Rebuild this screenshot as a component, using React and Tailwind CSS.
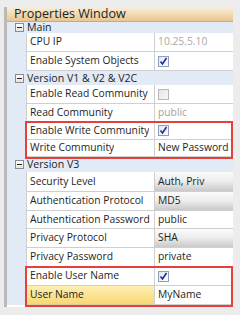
import React from "react";

const font = { fontFamily: '"Open Sans", "Noto Sans", sans-serif' };

function Minus() {
  return (
    <div className="w-[9px] h-[9px] border border-[#8c8c8c] bg-gradient-to-b from-white to-[#e4e4e4] flex items-center justify-center">
      <div className="w-[5px] h-[1px] bg-[#222]" />
    </div>
  );
}

function Check({ checked }) {
  if (!checked)
    return <div className="w-[11px] h-[11px] border border-[#b8b8b8] bg-gradient-to-br from-[#e6e6e6] to-[#f6f6f6]" />;
  return (
    <div className="w-[11px] h-[11px] border border-[#8e9fbd] bg-gradient-to-br from-[#dfe6f2] to-white flex items-center justify-center">
      <svg width="9" height="9" viewBox="0 0 9 9">
        <path d="M1.5 4.5 L3.5 7 L7.5 1" fill="none" stroke="#1f2a9c" strokeWidth="1.6" />
      </svg>
    </div>
  );
}

function Group({ title, h }) {
  return (
    <div className={`flex items-center bg-[#e2eaf5] ${h}`}>
      <div className="w-[19px] flex justify-end pr-[2px]">
        <Minus />
      </div>
      <span className="pl-[1px] text-[10.6px] text-[#1e1e1e] leading-none">{title}</span>
    </div>
  );
}

function Row({ label, h, children, kind, selected }) {
  return (
    <div className={`flex ${h}`}>
      <div className="w-[19px] shrink-0 bg-[#e2eaf5]" />
      <div
        className={`w-[128px] shrink-0 border-l border-b flex items-center pl-[3px] text-[10.3px] text-[#1e1e1e] ${
          selected ? "bg-gradient-to-b from-[#fdeeb0] to-[#f8d874] border-[#d9cf9c]" : "bg-white border-[#cfcfcf]"
        }`}
      >
        <span className="whitespace-nowrap overflow-hidden">{label}</span>
      </div>
      <div
        className={`flex-1 border-l border-b border-[#cfcfcf] flex items-center pl-[3px] text-[10.3px] whitespace-nowrap overflow-hidden ${
          kind === "combo" ? "bg-gradient-to-b from-[#fbfbfb] via-[#ececec] to-[#c9c9c9]" : "bg-white"
        }`}
      >
        {children}
      </div>
    </div>
  );
}

function Highlight({ children }) {
  return (
    <div className="relative">
      {children}
      <div className="absolute left-[18px] right-0 top-[-1px] bottom-[-2px] border-2 border-[#e5413c] pointer-events-none" />
    </div>
  );
}

export default function App() {
  return (
    <div className="w-[240px] h-[315px] bg-[#ececec] overflow-hidden" style={font}>
      <div className="flex pt-[7px] pl-[4px]">
        <div className="w-[3px] h-[300px] bg-[#b9b9b9]" />
        <div className="w-[226px] h-[300px] bg-white flex flex-col">
          <div className="h-[14px] bg-gradient-to-b from-[#faeed8] to-[#e8c68e] flex items-center pl-[7px]">
            <span className="text-[12.6px] text-[#1e1e1e] leading-none">Properties Window</span>
          </div>
          <div className="h-[1px] bg-[#9fb1c7]" />
          <Group title="Main" h="h-[11px]" />
          <Row label="CPU IP" h="h-[19px]">
            <span className="text-[#a9a9a9]">10.25.5.10</span>
          </Row>
          <Row label="Enable System Objects" h="h-[19px]">
            <Check checked />
          </Row>
          <Group title="Version V1 & V2 & V2C" h="h-[14px]" />
          <Row label="Enable Read Community" h="h-[19px]">
            <Check />
          </Row>
          <Row label="Read Community" h="h-[18px]">
            <span className="text-[#a3a3a3]">public</span>
          </Row>
          <Highlight>
            <Row label="Enable Write Community" h="h-[18px]">
              <Check checked />
            </Row>
            <Row label="Write Community" h="h-[17px]">
              <span className="text-[#1e1e1e]">New Password</span>
            </Row>
          </Highlight>
          <Group title="Version V3" h="h-[15px]" />
          <Row label="Security Level" h="h-[20px]" kind="combo">
            <span className="text-[#1e1e1e]">Auth, Priv</span>
          </Row>
          <Row label="Authentication Protocol" h="h-[19px]" kind="combo">
            <span className="text-[#1e1e1e]">MD5</span>
          </Row>
          <Row label="Authentication Password" h="h-[18px]">
            <span className="text-[#1e1e1e]">public</span>
          </Row>
          <Row label="Privacy Protocol" h="h-[19px]" kind="combo">
            <span className="text-[#1e1e1e]">SHA</span>
          </Row>
          <Row label="Privacy Password" h="h-[19px]">
            <span className="text-[#1e1e1e]">private</span>
          </Row>
          <Highlight>
            <Row label="Enable User Name" h="h-[19px]">
              <Check checked />
            </Row>
            <Row label="User Name" h="h-[19px]" selected>
              <span className="text-[#1e1e1e]">MyName</span>
            </Row>
          </Highlight>
        </div>
      </div>
    </div>
  );
}
